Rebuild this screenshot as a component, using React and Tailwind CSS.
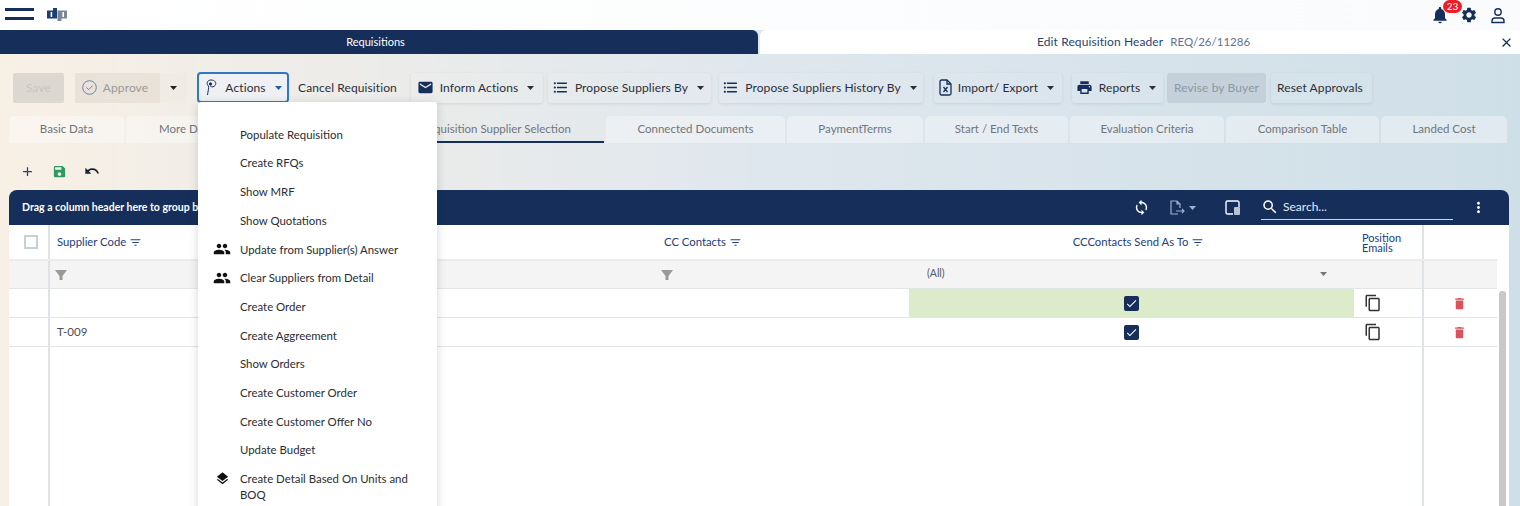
import {
  MdAdd, MdCheck, MdClose, MdContentCopy, MdDelete, MdEmail, MdFilterList, MdFormatListBulleted,
  MdGroup, MdLayers, MdMoreVert, MdNotifications, MdPrint, MdSave, MdSearch, MdSettings, MdSync, MdUndo,
} from 'react-icons/md'

const NAVY = '#152e5a'

const MENU = [
  { label: 'Populate Requisition' },
  { label: 'Create RFQs' },
  { label: 'Show MRF' },
  { label: 'Show Quotations' },
  { label: 'Update from Supplier(s) Answer', icon: MdGroup },
  { label: 'Clear Suppliers from Detail', icon: MdGroup },
  { label: 'Create Order' },
  { label: 'Create Aggreement' },
  { label: 'Show Orders' },
  { label: 'Create Customer Order' },
  { label: 'Create Customer Offer No' },
  { label: 'Update Budget' },
]

const TABS = [
  { label: 'Basic Data', w: 'w-[115px]' },
  { label: 'More Data', w: 'w-[120px]' },
  { label: '', w: 'w-[138px]' },
  { label: 'Requisition Supplier Selection', w: 'w-[216px]', active: true },
  { label: 'Connected Documents', w: 'w-[179px]' },
  { label: 'PaymentTerms', w: 'w-[136px]' },
  { label: 'Start / End Texts', w: 'w-[143px]' },
  { label: 'Evaluation Criteria', w: 'w-[154px]' },
  { label: 'Comparison Table', w: 'w-[153px]' },
  { label: 'Landed Cost', w: 'w-[126px]' },
]

function Caret({ className = 'text-[#152e5a]' }) {
  return (
    <svg width="7" height="4" viewBox="0 0 7 4" className={className}>
      <path d="M0 0h7L3.5 4z" fill="currentColor" />
    </svg>
  )
}

function ToolButton({ width, children }) {
  return (
    <div className={`${width} h-[30px] pr-[3px] flex items-center justify-center gap-[6px] rounded-[3px] bg-white/5 shadow-[0_1px_3px_rgba(60,80,110,0.12)] text-[#2b2f38] shrink-0`}>
      {children}
    </div>
  )
}

function ActionsIcon() {
  return (
    <svg width="14" height="17" viewBox="0 0 14 17" fill="none" stroke={NAVY} strokeWidth="1">
      <path d="M3.5 16 C4 12 5 9 4.5 7 C2 5 3 1 7 1 C11 1 13 4 11 6.5 C10 8 8 8 6.5 7.5" />
      <circle cx="6.5" cy="5" r="1.2" fill={NAVY} />
    </svg>
  )
}

function ExcelIcon() {
  return (
    <svg width="13" height="17" viewBox="0 0 13 17" fill="none" stroke={NAVY} strokeWidth="1.3">
      <path d="M1 2.5a1.5 1.5 0 0 1 1.5-1.5H8l4 4v9.5a1.5 1.5 0 0 1-1.5 1.5h-8A1.5 1.5 0 0 1 1 14.5z" />
      <path d="M8 1v4h4M4.5 8l4 5M8.5 8l-4 5" />
    </svg>
  )
}

function ExportIcon() {
  return (
    <svg width="16" height="16" viewBox="0 0 16 16" fill="none" stroke="#9fb0c8" strokeWidth="1.2">
      <path d="M9 14H2V1h6l3 3v4M8 1v3h3M7 11h8M13 9l2 2-2 2" />
    </svg>
  )
}

function ColumnsIcon() {
  return (
    <svg width="16" height="16" viewBox="0 0 16 16" fill="none">
      <path d="M8 14H2.5A1.5 1.5 0 0 1 1 12.5v-10A1.5 1.5 0 0 1 2.5 1h10A1.5 1.5 0 0 1 14 2.5V7" stroke="#fff" strokeWidth="1.4" />
      <rect x="9" y="7" width="6" height="8" rx="1" fill="#b9c3d3" />
    </svg>
  )
}

function Logo() {
  return (
    <svg width="20" height="13" viewBox="0 0 20 13" className="ml-[13px] -mt-[2px]">
      <path d="M0 2.5h6V0h4v10.5H0z" fill="#1d3f73" />
      <path d="M3.6 4h1.6v5H3.6z" fill="#fff" />
      <path d="M10.5 2.5H20v8h-5.5V13h-4z" fill="#7b8794" />
      <path d="M15.4 4H17v5h-1.6z" fill="#fff" />
    </svg>
  )
}

function HeaderLabel({ children }) {
  return (
    <span className="flex items-center gap-[3px] text-[11.3px] text-[#22407a]">
      {children}
      <MdFilterList size={13} />
    </span>
  )
}

function FilterFunnel() {
  return (
    <svg width="12" height="10" viewBox="0 0 12 10">
      <path d="M0 0h12L7.5 6v4h-3V6z" fill="#999" />
    </svg>
  )
}

function Checked() {
  return (
    <span className="w-[15px] h-[15px] rounded-[2px] flex items-center justify-center bg-[#152e5a] text-white">
      <MdCheck size={13} />
    </span>
  )
}

function DataRow({ code, green }) {
  return (
    <div className="grid grid-cols-[41px_859px_445px_68px_75px] h-[29px] border-b border-[#e2e5e8] text-[11.5px] text-[#4a4d52]">
      <div className="border-r-2 border-[#dfe2e6]" />
      <div className="flex items-center pl-[7px]">{code}</div>
      <div className={`flex items-center justify-center ${green ? 'bg-[#dcebc9]' : ''}`}><Checked /></div>
      <div className="flex items-center pl-[10px] text-[#333]"><MdContentCopy size={18} /></div>
      <div className="flex items-center justify-center pr-[2px] border-l-2 border-[#dfe2e6] text-[#d9525c]"><MdDelete size={15} /></div>
    </div>
  )
}

export default function App() {
  return (
    <div className="relative w-[1520px] h-[506px] overflow-hidden font-['Lato',sans-serif] bg-gradient-to-r from-[#f8f0e5] via-[#dfe7ee] to-[#cfdfe8]">
      {/* top bar */}
      <div className="h-[30px] bg-gradient-to-r from-white to-[#f9fbfc] flex items-center pl-[5px] pr-[14px]">
        <div className="flex flex-col gap-[6px] w-[29px] -mt-[2px]">
          <div className="h-[3px] bg-[#152e5a]" />
          <div className="h-[3px] bg-[#152e5a]" />
        </div>
        <Logo />
        <div className="ml-auto flex items-center">
          <div className="relative text-[#152e5a]">
            <MdNotifications size={20} />
            <span className="absolute -top-[5px] left-[13px] w-[19px] h-[13px] rounded-full bg-[#ee1c25] text-white text-[10px] leading-[13px] text-center">23</span>
          </div>
          <div className="ml-[10px] text-[#152e5a]"><MdSettings size={18} /></div>
          <svg className="ml-[12px]" width="16" height="17" viewBox="0 0 16 17" fill="none" stroke={NAVY} strokeWidth="1.4">
            <circle cx="8" cy="5" r="3.2" />
            <path d="M2 15.5v-1.5a3 3 0 0 1 3-3h6a3 3 0 0 1 3 3v1.5z" />
          </svg>
        </div>
      </div>

      {/* page tabs */}
      <div className="h-[24px] flex">
        <div className="w-[758px] pr-[7px] bg-[#152e5a] rounded-tr-[6px] text-white text-[11px] flex items-center justify-center">Requisitions</div>
        <div className="flex-1 bg-white rounded-tl-[6px] ml-[2px] flex items-center pl-[277px] pr-[6px] text-[12px] text-[#2a4472]">
          <span className="tracking-[0.1px]">Edit Requisition Header</span>
          <span className="ml-[7px] text-[11.5px] text-[#5e7391]">REQ/26/11286</span>
          <MdClose size={15} className="ml-auto text-[#152e5a]" />
        </div>
      </div>

      {/* toolbar */}
      <div className="mt-[18px] pl-[13px] flex items-center text-[12px] tracking-[0.1px]">
        <div className="w-[51px] h-[30px] rounded-[2px] bg-[#dcd8d1] flex items-center justify-center text-[#c9c5be]">Save</div>
        <div className="ml-[11px] w-[85px] h-[30px] pr-[5px] bg-[#e8e2d9] flex items-center justify-center gap-[6px] text-[#9a9a98]">
          <svg width="15" height="15" viewBox="0 0 15 15" fill="none" stroke="#6f86a8" strokeWidth="1">
            <circle cx="7.5" cy="7.5" r="6.8" />
            <path d="M4.5 7.5l2.2 2.2 3.8-4" />
          </svg>
          Approve
        </div>
        <div className="w-[26px] h-[30px] bg-[#f0ebe3] flex items-center justify-center"><Caret className="text-[#222]" /></div>
        <div className="ml-[11px] w-[92px] h-[31px] border-2 border-[#2f77c0] rounded-[4px] flex items-center justify-center gap-[7px] bg-[#eef0f3] text-[#2b2f38]">
          <ActionsIcon />
          Actions
          <Caret className="ml-[2px] text-[#1f5fa8]" />
        </div>
        <div className="w-[117px] h-[30px] flex items-center justify-center text-[#2b2f38]">Cancel Requisition</div>
        <div className="ml-[5px]"><ToolButton width="w-[132px]"><MdEmail size={17} className="text-[#152e5a]" />Inform Actions<Caret className="ml-[3px]" /></ToolButton></div>
        <div className="ml-[5px]"><ToolButton width="w-[163px]"><MdFormatListBulleted size={17} className="text-[#152e5a]" />Propose Suppliers By<Caret className="ml-[3px]" /></ToolButton></div>
        <div className="ml-[8px]"><ToolButton width="w-[204px]"><MdFormatListBulleted size={17} className="text-[#152e5a]" />Propose Suppliers History By<Caret className="ml-[3px]" /></ToolButton></div>
        <div className="ml-[11px]"><ToolButton width="w-[128px]"><ExcelIcon />Import/ Export<Caret className="ml-[3px]" /></ToolButton></div>
        <div className="ml-[10px]"><ToolButton width="w-[91px]"><MdPrint size={17} className="text-[#152e5a]" />Reports<Caret className="ml-[3px]" /></ToolButton></div>
        <div className="ml-[4px] w-[99px] h-[30px] rounded-[3px] bg-[#c4d0da] flex items-center justify-center text-[#8b98a5]">Revise by Buyer</div>
        <div className="ml-[5px]"><ToolButton width="w-[101px]">Reset Approvals</ToolButton></div>
      </div>

      {/* section tabs */}
      <div className="mt-[13px] pl-[9px] flex gap-[2px] h-[27px]">
        {TABS.map((tab, i) => (
          <div
            key={i}
            className={`${tab.w} shrink-0 rounded-t-[5px] flex items-center justify-center text-[11.5px] text-[#70757c] ${tab.active ? 'border-b-2 border-[#152e5a]' : 'bg-white/35 pb-[2px]'}`}
          >
            {tab.label}
          </div>
        ))}
      </div>

      {/* grid actions */}
      <div className="mt-[17px] pl-[20px] h-[22px] flex items-center">
        <MdAdd size={15} className="text-[#22407a]" />
        <MdSave size={15} className="ml-[17px] text-[#2f9a5f]" />
        <MdUndo size={16} className="ml-[17px] text-[#1c2430]" />
      </div>

      {/* grid */}
      <div className="mt-[8px] ml-[9px] w-[1500px]">
        <div className="h-[35px] bg-[#152e5a] rounded-t-[8px] flex items-center pl-[13px] text-white">
          <span className="text-[10.5px] font-bold">Drag a column header here to group by this column</span>
          <MdSync size={17} className="ml-auto" />
          <div className="ml-[19px] flex items-center gap-[4px]"><ExportIcon /><Caret className="text-[#9fb0c8]" /></div>
          <div className="ml-[29px]"><ColumnsIcon /></div>
          <div className="ml-[20px] w-[192px] h-[25px] border-b border-[#c9d2e0] flex items-center gap-[4px]">
            <MdSearch size={18} />
            <span className="text-[12px] text-[#e6eaf1]">Search...</span>
          </div>
          <MdMoreVert size={17} className="ml-[17px] mr-[22px]" />
        </div>

        <div className="h-[281px] bg-white flex">
          <div className="w-[1488px] shrink-0 flex flex-col">
            <div className="grid grid-cols-[41px_606px_253px_445px_68px_75px] h-[36px] border-b-2 border-[#e9ebed]">
              <div className="flex items-center pl-[15px] border-r-2 border-[#dfe2e6]">
                <span className="w-[14px] h-[14px] border-2 border-[#c7d0d5]" />
              </div>
              <div className="flex items-center pl-[7px]"><HeaderLabel>Supplier Code</HeaderLabel></div>
              <div className="flex items-center pl-[8px]"><HeaderLabel>CC Contacts</HeaderLabel></div>
              <div className="flex items-center justify-center pl-[14px]"><HeaderLabel>CCContacts Send As To</HeaderLabel></div>
              <div className="flex items-center pl-[8px] pt-[2px] text-[11px] leading-[10px] text-[#22407a]">Position<br />Emails</div>
              <div className="border-l-2 border-[#dfe2e6]" />
            </div>
            <div className="grid grid-cols-[41px_606px_253px_445px_68px_75px] h-[28px] bg-[#f4f4f4] border-b border-[#e2e5e8]">
              <div className="border-r-2 border-[#dfe2e6]" />
              <div className="flex items-center pl-[5px]"><FilterFunnel /></div>
              <div className="flex items-center pl-[5px]"><FilterFunnel /></div>
              <div className="flex items-center justify-between pl-[18px] pr-[27px] pb-[2px] text-[10.5px] text-[#55585c]">
                (All)
                <Caret className="text-[#777]" />
              </div>
              <div />
              <div className="border-l-2 border-[#dfe2e6]" />
            </div>
            <DataRow green />
            <DataRow code="T-009" />
            <div className="flex-1 grid grid-cols-[41px_1372px_75px]">
              <div className="border-r-2 border-[#dfe2e6]" />
              <div />
              <div className="border-l-2 border-[#dfe2e6]" />
            </div>
          </div>
          <div className="flex-1 pt-[66px] pl-[2px] flex justify-start">
            <div className="w-[7px] h-full bg-[#c8c8c8] rounded-t-[3px]" />
          </div>
        </div>
      </div>

      {/* actions menu */}
      <div className="absolute left-[198px] top-[102px] w-[239px] h-[420px] bg-white rounded-[3px] shadow-[0_2px_10px_rgba(40,50,70,0.2)] pt-[18px] text-[11.4px] text-[#2b2d31]">
        {MENU.map(({ label, icon: Icon }) => (
          <div key={label} className="h-[28.7px] flex items-center">
            <span className="w-[42px] pl-[15px] flex">{Icon && <Icon size={18} className="text-[#111]" />}</span>
            {label}
          </div>
        ))}
        <div className="flex mt-[7px] leading-[16px]">
          <span className="w-[42px] pl-[17px] flex"><MdLayers size={15} className="text-[#111]" /></span>
          <span className="w-[176px]">Create Detail Based On Units and BOQ</span>
        </div>
      </div>
    </div>
  )
}
